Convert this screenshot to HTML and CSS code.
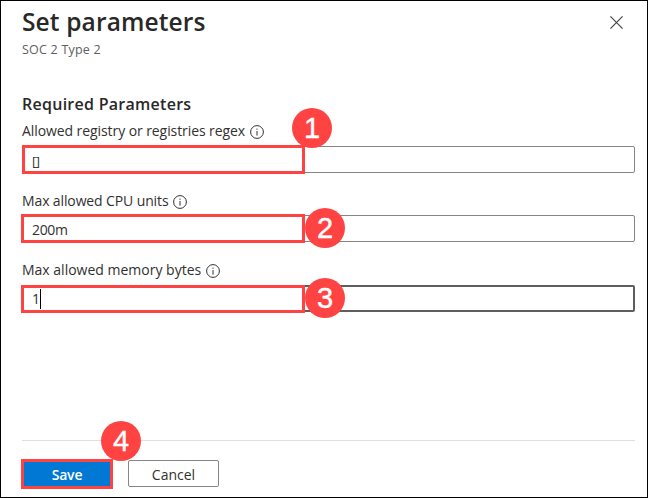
FILE: index.html
```html
<!DOCTYPE html>
<html lang="en">
<head>
<meta charset="utf-8">
<title>Set parameters</title>
<link rel="stylesheet" href="styles.css">
</head>
<body>
<main class="panel">
  <header class="head">
    <div>
      <h1 class="title">Set parameters</h1>
      <p class="subtitle">SOC 2 Type 2</p>
    </div>
    <svg class="close" viewBox="0 0 13 13"><path d="M.4.4l12.2 12.2M12.6.4L.4 12.6"/></svg>
  </header>
  <section class="form">
    <h2 class="section">Required Parameters</h2>
    <div class="field">
      <div class="label"><span class="l1">Allowed registry or registries regex</span><svg class="info" viewBox="0 0 14 14"><circle cx="7" cy="7" r="6.4"/><path d="M7 6v4.6M7 3.6v1.2"/></svg></div>
      <div class="input"><span class="brackets">[]</span><i class="mark first"></i><b class="badge raised">1</b></div>
    </div>
    <div class="field">
      <div class="label middle"><span class="l2">Max allowed CPU units</span><svg class="info" viewBox="0 0 14 14"><circle cx="7" cy="7" r="6.4"/><path d="M7 6v4.6M7 3.6v1.2"/></svg></div>
      <div class="input"><span class="value">200m</span><i class="mark"></i><b class="badge">2</b></div>
    </div>
    <div class="field last">
      <div class="label"><span class="l3">Max allowed memory bytes</span><svg class="info" viewBox="0 0 14 14"><circle cx="7" cy="7" r="6.4"/><path d="M7 6v4.6M7 3.6v1.2"/></svg></div>
      <div class="input focused"><span class="value">1</span><i class="caret"></i><i class="mark active"></i><b class="badge third">3</b></div>
    </div>
  </section>
  <footer class="foot">
    <div class="btn save"><span>Save</span><b class="badge fourth">4</b></div>
    <div class="btn cancel"><span>Cancel</span></div>
  </footer>
</main>
</body>
</html>
```
FILE: styles.css
```css
* { box-sizing: border-box; }
body { margin: 0; background: #fff; }
.panel {
  width: 648px; height: 498px; padding: 0 12px 0 21px;
  border: 1px solid #000; display: flex; flex-direction: column;
  font-family: "Open Sans", "Noto Sans", sans-serif; font-size: 14px; color: #323130;
}
h1, h2, p { margin: 0; }
.head { height: 92px; display: flex; justify-content: space-between; padding-top: 5px; }
.title { font-size: 24.5px; line-height: 32px; font-weight: 600; letter-spacing: .14px; color: #292827; white-space: nowrap; }
.subtitle { font-size: 12.5px; line-height: 18px; letter-spacing: .22px; margin-top: 3px; color: #605e5c; }
.close { width: 13px; height: 13px; margin: 10px 12px 0 0; fill: none; stroke: #444; stroke-width: 1.2; }
.section { font-size: 16px; line-height: 23px; height: 26px; font-weight: 600; letter-spacing: .27px; color: #292827; }
.field { height: 69px; width: 613px; }
.label { height: 27px; display: flex; align-items: center; gap: 5px; white-space: nowrap; padding-bottom: 4px; }
.middle { padding-bottom: 3px; }
.l1 { letter-spacing: -.08px; }
.l2 { letter-spacing: -.12px; }
.l3 { letter-spacing: 0; }
.info { width: 14px; height: 14px; margin-top: 3px; fill: none; stroke: #323130; stroke-width: 1; }
.input {
  position: relative; height: 27px; border: 1px solid #868584; border-radius: 2px;
  padding: 2px 0 0 9px; display: flex; align-items: center; line-height: 20px;
}
.brackets { letter-spacing: -.4px; font-size: 13px; }
.value { letter-spacing: -.35px; }
.last .label { height: 28px; }
.focused { border: 2px solid #605e5c; padding: 0 0 0 8px; }
.caret { width: 1px; height: 20px; background: #000; }
.mark { position: absolute; left: -2px; top: -2px; width: 284px; height: 29px; border: 3px solid #ff4343; }
.first { left: -1px; width: 283px; }
.active { left: -3px; top: -2px; height: 28px; }
.badge {
  position: absolute; left: 282px; top: -8px; width: 40px; height: 40px; border-radius: 50%;
  background: #ff4343; color: #fff; font: 29px/40px "Liberation Sans", sans-serif; text-align: center;
  -webkit-text-stroke: .4px #fff;
}
.raised { left: 269px; top: -39px; }
.third { left: 281px; top: -9px; }
.foot { margin-top: auto; height: 57px; border-top: 1px solid #dfdedd; padding-top: 18px; display: flex; width: 613px; }
.btn { position: relative; display: flex; align-items: center; justify-content: center; }
.save { width: 92px; height: 30px; margin-left: -1px; border: 3px solid #ff4343; background: #0078d4; color: #fff; font-weight: 600; letter-spacing: -.2px; }
.cancel { width: 91px; height: 27px; margin: 1px 0 0 15px; padding-top: 1px; border: 1px solid #868584; border-radius: 2px; }
.fourth { left: 77px; top: -41px; letter-spacing: 0; }
```
